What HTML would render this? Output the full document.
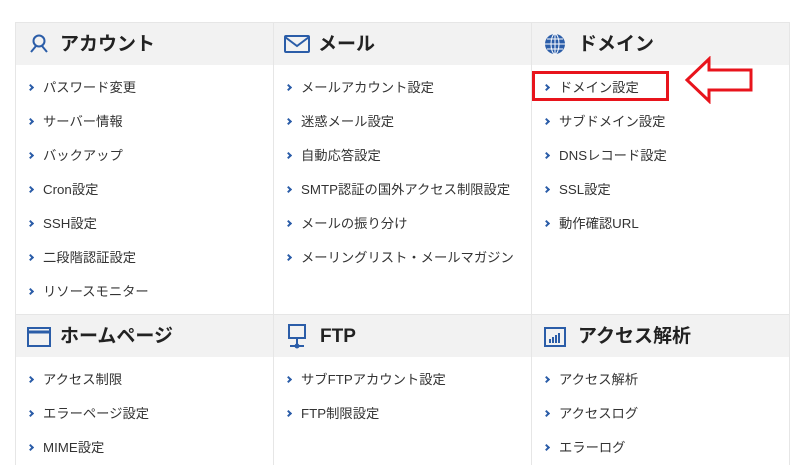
<!DOCTYPE html>
<html><head><meta charset="utf-8"><style>
body{margin:0;width:800px;height:465px;background:#fff;overflow:hidden;position:relative;font-family:"Liberation Sans","Noto Sans CJK JP",sans-serif;color:#333}
.a{position:absolute}
.hd{position:absolute;height:42px;background:#f2f2f2;border-right:1px solid #e6e6e6}
.ht{position:absolute;font-size:19px;font-weight:bold;color:#222;line-height:22px}
.it{position:absolute;font-size:13.3px;line-height:16px;color:#333;white-space:nowrap}
.it:before{content:"";display:inline-block;width:3px;height:3px;border-right:2.5px solid #2b5da8;border-top:2.5px solid #2b5da8;transform:rotate(45deg);margin-right:10px;vertical-align:2px}
.vl{position:absolute;width:1px;background:#e6e6e6}
</style></head><body>
<div class="a" style="left:15px;top:22px;width:775px;height:443px;border:1px solid #e6e6e6;border-bottom:none;box-sizing:border-box"></div>
<div class="hd" style="left:16px;top:23px;width:257px"></div>
<div class="hd" style="left:274px;top:23px;width:257px"></div>
<div class="hd" style="left:532px;top:23px;width:257px;border-right:none"></div>
<div class="a" style="left:15px;top:314px;width:775px;height:1px;background:#e6e6e6"></div>
<div class="hd" style="left:16px;top:315px;width:257px"></div>
<div class="hd" style="left:274px;top:315px;width:257px"></div>
<div class="hd" style="left:532px;top:315px;width:257px;border-right:none"></div>
<div class="vl" style="left:273px;top:22px;height:443px"></div>
<div class="vl" style="left:531px;top:22px;height:443px"></div>

<svg class="a" style="left:28px;top:33px" width="22" height="22" viewBox="0 0 22 22" fill="none" stroke="#2b5da8" stroke-width="2"><circle cx="11" cy="8" r="5.5"/><path d="M8 13 L3 19 M14 13 L19 19"/></svg>
<div class="ht" style="left:60px;top:34px">アカウント</div>
<svg class="a" style="left:284px;top:35px" width="26" height="18" viewBox="0 0 26 18" fill="none" stroke="#2b5da8" stroke-width="2"><rect x="1" y="1" width="24" height="16" rx="1"/><path d="M1 2 L13 11 L25 2"/></svg>
<div class="ht" style="left:318px;top:34px">メール</div>
<svg class="a" style="left:544px;top:33px" width="22" height="22" viewBox="0 0 22 22"><circle cx="11" cy="11" r="10" fill="#2b5da8"/><g stroke="#fff" stroke-width="1" fill="none"><ellipse cx="11" cy="11" rx="4" ry="10"/><path d="M11 1V21M1 11H21M3 6H19M3 16H19"/></g></svg>
<div class="ht" style="left:578px;top:34px">ドメイン</div>

<div class="it" style="left:28px;top:80px">パスワード変更</div>
<div class="it" style="left:28px;top:114px">サーバー情報</div>
<div class="it" style="left:28px;top:148px">バックアップ</div>
<div class="it" style="left:28px;top:182px">Cron設定</div>
<div class="it" style="left:28px;top:216px">SSH設定</div>
<div class="it" style="left:28px;top:250px">二段階認証設定</div>
<div class="it" style="left:28px;top:284px">リソースモニター</div>

<div class="it" style="left:286px;top:80px">メールアカウント設定</div>
<div class="it" style="left:286px;top:114px">迷惑メール設定</div>
<div class="it" style="left:286px;top:148px">自動応答設定</div>
<div class="it" style="left:286px;top:182px">SMTP認証の国外アクセス制限設定</div>
<div class="it" style="left:286px;top:216px">メールの振り分け</div>
<div class="it" style="left:286px;top:250px">メーリングリスト・メールマガジン</div>

<div class="it" style="left:544px;top:80px">ドメイン設定</div>
<div class="it" style="left:544px;top:114px">サブドメイン設定</div>
<div class="it" style="left:544px;top:148px">DNSレコード設定</div>
<div class="it" style="left:544px;top:182px">SSL設定</div>
<div class="it" style="left:544px;top:216px">動作確認URL</div>

<div class="a" style="left:532px;top:71px;width:137px;height:30px;border:3px solid #e8141c;box-sizing:border-box"></div>
<svg class="a" style="left:684px;top:56px" width="72" height="48" viewBox="0 0 72 48"><path d="M3 24 L25 3 L25 14 L67 14 L67 34 L25 34 L25 45 Z" fill="#fff" stroke="#e8141c" stroke-width="3" stroke-linejoin="miter"/></svg>

<svg class="a" style="left:27px;top:327px" width="24" height="20" viewBox="0 0 24 20" fill="none" stroke="#2b5da8" stroke-width="2"><rect x="1" y="1" width="22" height="18"/><path d="M1 5H23" stroke-width="3"/></svg>
<div class="ht" style="left:60px;top:326px">ホームページ</div>
<svg class="a" style="left:287px;top:324px" width="20" height="26" viewBox="0 0 20 26" fill="none" stroke="#2b5da8" stroke-width="2"><rect x="2" y="1" width="16" height="13"/><path d="M10 14V22M3 22H17"/><circle cx="10" cy="22" r="1.5" fill="#2b5da8"/></svg>
<div class="ht" style="left:320px;top:326px">FTP</div>
<svg class="a" style="left:544px;top:327px" width="22" height="20" viewBox="0 0 22 20"><rect x="1" y="1" width="20" height="18" fill="none" stroke="#2b5da8" stroke-width="2"/><g fill="#2b5da8"><rect x="5" y="12" width="2" height="4"/><rect x="8" y="10" width="2" height="6"/><rect x="11" y="8" width="2" height="8"/><rect x="14" y="6" width="2" height="10"/></g></svg>
<div class="ht" style="left:578px;top:326px">アクセス解析</div>

<div class="it" style="left:28px;top:372px">アクセス制限</div>
<div class="it" style="left:28px;top:406px">エラーページ設定</div>
<div class="it" style="left:28px;top:440px">MIME設定</div>
<div class="it" style="left:286px;top:372px">サブFTPアカウント設定</div>
<div class="it" style="left:286px;top:406px">FTP制限設定</div>
<div class="it" style="left:544px;top:372px">アクセス解析</div>
<div class="it" style="left:544px;top:406px">アクセスログ</div>
<div class="it" style="left:544px;top:440px">エラーログ</div>
</body></html>
